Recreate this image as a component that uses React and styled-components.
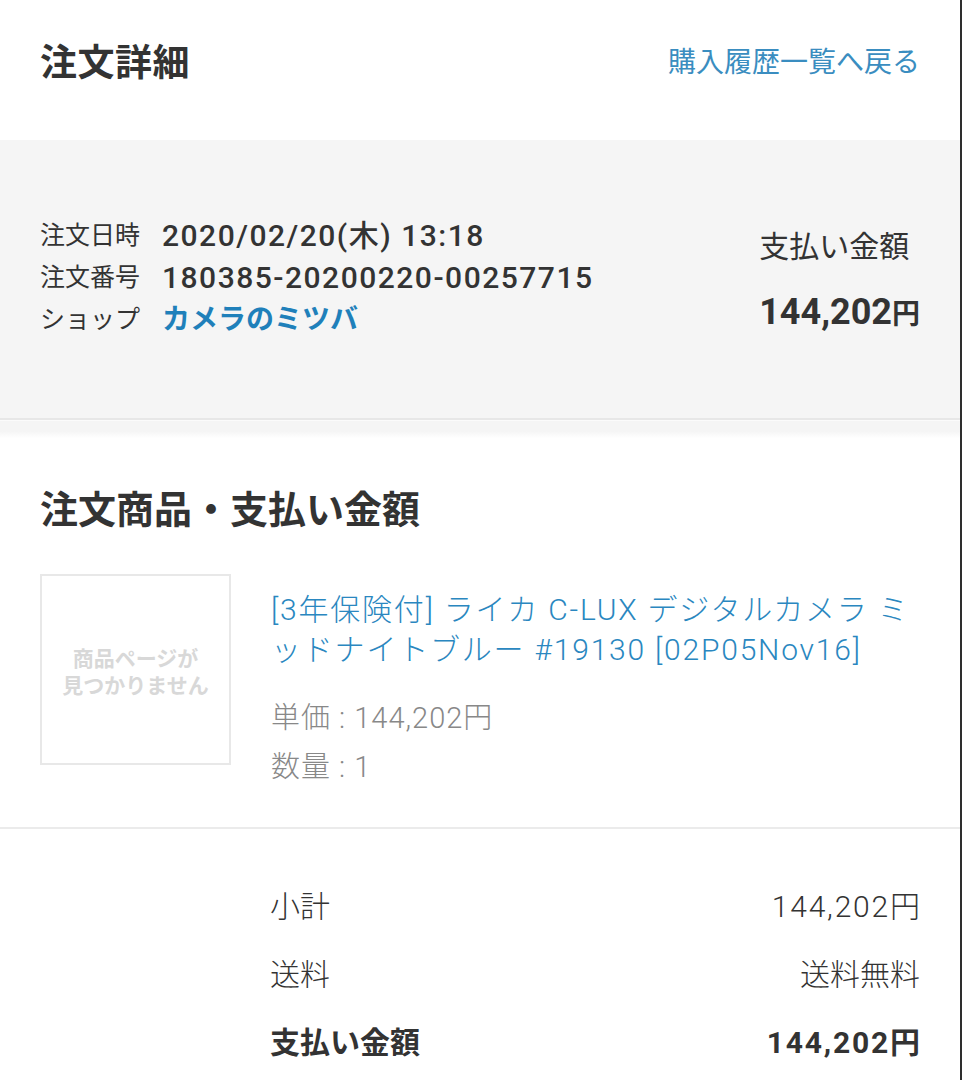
import React from "react";
import styled, { createGlobalStyle } from "styled-components";

const Global = createGlobalStyle`
  html, body { margin: 0; padding: 0; background: #fff; }
  body { font-family: Roboto, "Noto Sans CJK JP", sans-serif; color: #333; }
  * { box-sizing: border-box; }
`;

const Page = styled.div`
  width: 962px;
  height: 1080px;
  overflow: hidden;
  border-right: 2px solid #2e2e2e;
  background: #fff;
`;

const Header = styled.header`
  height: 140px;
  display: flex;
  align-items: center;
  justify-content: space-between;
  padding: 0 40px;
  padding-bottom: 20px;
`;

const PageTitle = styled.h1`
  margin: 0;
  font-size: 37px;
  font-weight: 700;
  color: #333;
  letter-spacing: 0.5px;
`;

const BackLink = styled.a`
  font-size: 28px;
  color: #3a8dc0;
  text-decoration: none;
  font-weight: 400;
`;

const Summary = styled.section`
  height: 280px;
  background: #f5f5f5;
  border-bottom: 2px solid #e7e7e7;
  display: flex;
  align-items: center;
  justify-content: space-between;
  padding: 0 40px;
  padding-bottom: 2px;
`;

const InfoGrid = styled.dl`
  margin: 0;
  display: grid;
  grid-template-columns: auto 1fr;
  column-gap: 22px;
  align-items: center;
`;

const InfoLabel = styled.dt`
  font-size: 25px;
  line-height: 42px;
  color: #333;
  font-weight: 400;
`;

const InfoValue = styled.dd`
  margin: 0;
  font-size: ${(p) => (p.$link ? 28 : 30)}px;
  line-height: 42px;
  letter-spacing: ${(p) => (p.$link ? 0 : 1.5)}px;
  color: ${(p) => (p.$link ? "#1f80ba" : "#333")};
  font-weight: ${(p) => (p.$link ? 700 : 500)};
`;

const PayBox = styled.div`
  display: flex;
  flex-direction: column;
  gap: 23px;
  padding-top: 8px;
`;

const PayLabel = styled.div`
  font-size: 30px;
  color: #333;
  line-height: 40px;
`;

const PayAmount = styled.div`
  font-size: 36px;
  font-weight: 700;
  line-height: 44px;
  color: #333;
`;

const Yen = styled.span`
  font-size: 28px;
`;

const Spacer = styled.div`
  height: 18px;
  border-top: 1px solid #fbfbfb;
  background: linear-gradient(#f5f5f5 60%, #fff);
`;

const Section = styled.section`
  padding: 0 40px;
`;

const SectionTitle = styled.h2`
  margin: 0;
  height: 136px;
  display: flex;
  align-items: center;
  font-size: 38px;
  font-weight: 700;
  color: #333;
`;

const ItemRow = styled.div`
  display: flex;
  gap: 40px;
  padding-bottom: 35px;
`;

const Thumb = styled.div`
  flex: none;
  width: 191px;
  height: 191px;
  border: 2px solid #e8e8e8;
  display: flex;
  align-items: center;
  justify-content: center;
  text-align: center;
  font-size: 21px;
  line-height: 27px;
  font-weight: 700;
  color: #d8d8d8;
  padding-top: 6px;
`;

const ItemInfo = styled.div`
  flex: 1;
  padding-top: 16px;
`;

const ItemName = styled.a`
  display: block;
  font-size: 30px;
  line-height: 40px;
  font-weight: 300;
  letter-spacing: 1.8px;
  color: #2a87c0;
  text-decoration: none;
  margin-bottom: 24px;
`;

const ItemMeta = styled.div`
  font-size: 29px;
  line-height: 49px;
  font-weight: 300;
  letter-spacing: 1px;
  color: #888;
`;

const Divider = styled.hr`
  margin: 0;
  border: none;
  border-top: 2px solid #ebebeb;
`;

const Totals = styled.div`
  padding: 41px 40px 0 270px;
`;

const TotalRow = styled.div`
  display: flex;
  justify-content: space-between;
  align-items: center;
  height: 68px;
  font-size: 30px;
  font-weight: ${(p) => (p.$strong ? 700 : 300)};
  color: #333;
`;

const Amount = styled.span`
  letter-spacing: ${(p) => (p.$spaced ? 1.8 : 0)}px;
  margin-right: ${(p) => (p.$spaced ? -1.8 : 0)}px;
`;

export default function App() {
  return (
    <Page>
      <Global />
      <Header>
        <PageTitle>注文詳細</PageTitle>
        <BackLink href="#">購入履歴一覧へ戻る</BackLink>
      </Header>

      <Summary>
        <InfoGrid>
          <InfoLabel>注文日時</InfoLabel>
          <InfoValue>2020/02/20(木) 13:18</InfoValue>
          <InfoLabel>注文番号</InfoLabel>
          <InfoValue>180385-20200220-00257715</InfoValue>
          <InfoLabel>ショップ</InfoLabel>
          <InfoValue $link>カメラのミツバ</InfoValue>
        </InfoGrid>
        <PayBox>
          <PayLabel>支払い金額</PayLabel>
          <PayAmount>
            144,202<Yen>円</Yen>
          </PayAmount>
        </PayBox>
      </Summary>
      <Spacer />

      <Section>
        <SectionTitle>注文商品・支払い金額</SectionTitle>
        <ItemRow>
          <Thumb>
            商品ページが
            <br />
            見つかりません
          </Thumb>
          <ItemInfo>
            <ItemName href="#">
              [3年保険付] ライカ C-LUX デジタルカメラ ミッドナイトブルー #19130 [02P05Nov16]
            </ItemName>
            <ItemMeta>単価 : 144,202円</ItemMeta>
            <ItemMeta>数量 : 1</ItemMeta>
          </ItemInfo>
        </ItemRow>
      </Section>
      <Divider />

      <Totals>
        <TotalRow>
          <span>小計</span>
          <Amount $spaced>144,202円</Amount>
        </TotalRow>
        <TotalRow>
          <span>送料</span>
          <Amount>送料無料</Amount>
        </TotalRow>
        <TotalRow $strong>
          <span>支払い金額</span>
          <Amount $spaced>144,202円</Amount>
        </TotalRow>
      </Totals>
    </Page>
  );
}
